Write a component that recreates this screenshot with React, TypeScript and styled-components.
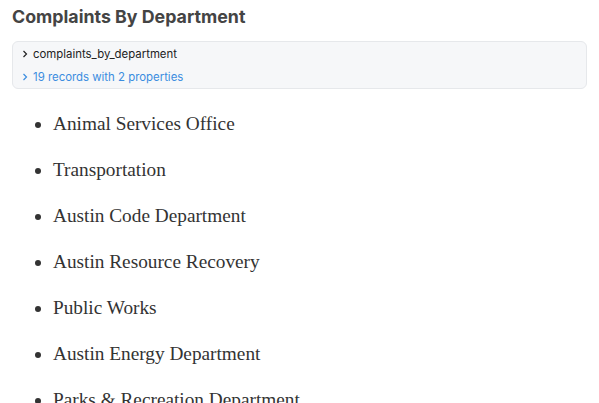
import * as React from 'react'
import styled, { createGlobalStyle } from 'styled-components'

const GlobalStyle = createGlobalStyle`
  html, body {
    margin: 0;
    padding: 0;
    background: #ffffff;
  }
`

const Page = styled.div`
  padding: 5px 12px 0 12px;
  width: 575px;
  height: 398px;
  overflow: hidden;
  box-sizing: content-box;
`

const Title = styled.h2`
  margin: 0;
  font-family: Inter, "Noto Sans", sans-serif;
  font-size: 17.8px;
  font-weight: 700;
  line-height: 24px;
  color: #444444;
`

const Inspector = styled.div`
  margin-top: 12px;
  background: #f6f7f9;
  border: 1px solid #e6e8eb;
  border-radius: 6px;
  padding: 0 9px;
  font-family: Inter, "Noto Sans", sans-serif;
  font-size: 11.4px;
`

const InspectorRow = styled.div<{ $blue?: boolean }>`
  display: flex;
  align-items: center;
  gap: 5px;
  height: 23px;
  color: ${p => (p.$blue ? '#3b8de0' : '#222222')};
`

const List = styled.ul`
  margin: 23px 0 0 0;
  padding: 0 0 0 41px;
  font-family: "Liberation Serif", "DejaVu Serif", serif;
  font-size: 19.3px;
  color: #333333;
`

const Item = styled.li`
  line-height: 24px;
  margin-bottom: 22px;
`

const departments = [
  'Animal Services Office',
  'Transportation',
  'Austin Code Department',
  'Austin Resource Recovery',
  'Public Works',
  'Austin Energy Department',
  'Parks & Recreation Department',
]

const Chevron = () => (
  <svg width="6" height="8" viewBox="0 0 6 8">
    <path d="M1.5 1 L4.5 4 L1.5 7" fill="none" stroke="currentColor" strokeWidth="1.2" />
  </svg>
)

export default function App() {
  return (
    <Page>
      <GlobalStyle />
      <Title>Complaints By Department</Title>
      <Inspector>
        <InspectorRow>
          <Chevron />
          complaints_by_department
        </InspectorRow>
        <InspectorRow $blue>
          <Chevron />
          19 records with 2 properties
        </InspectorRow>
      </Inspector>
      <List>
        {departments.map(d => (
          <Item key={d}>{d}</Item>
        ))}
      </List>
    </Page>
  )
}
